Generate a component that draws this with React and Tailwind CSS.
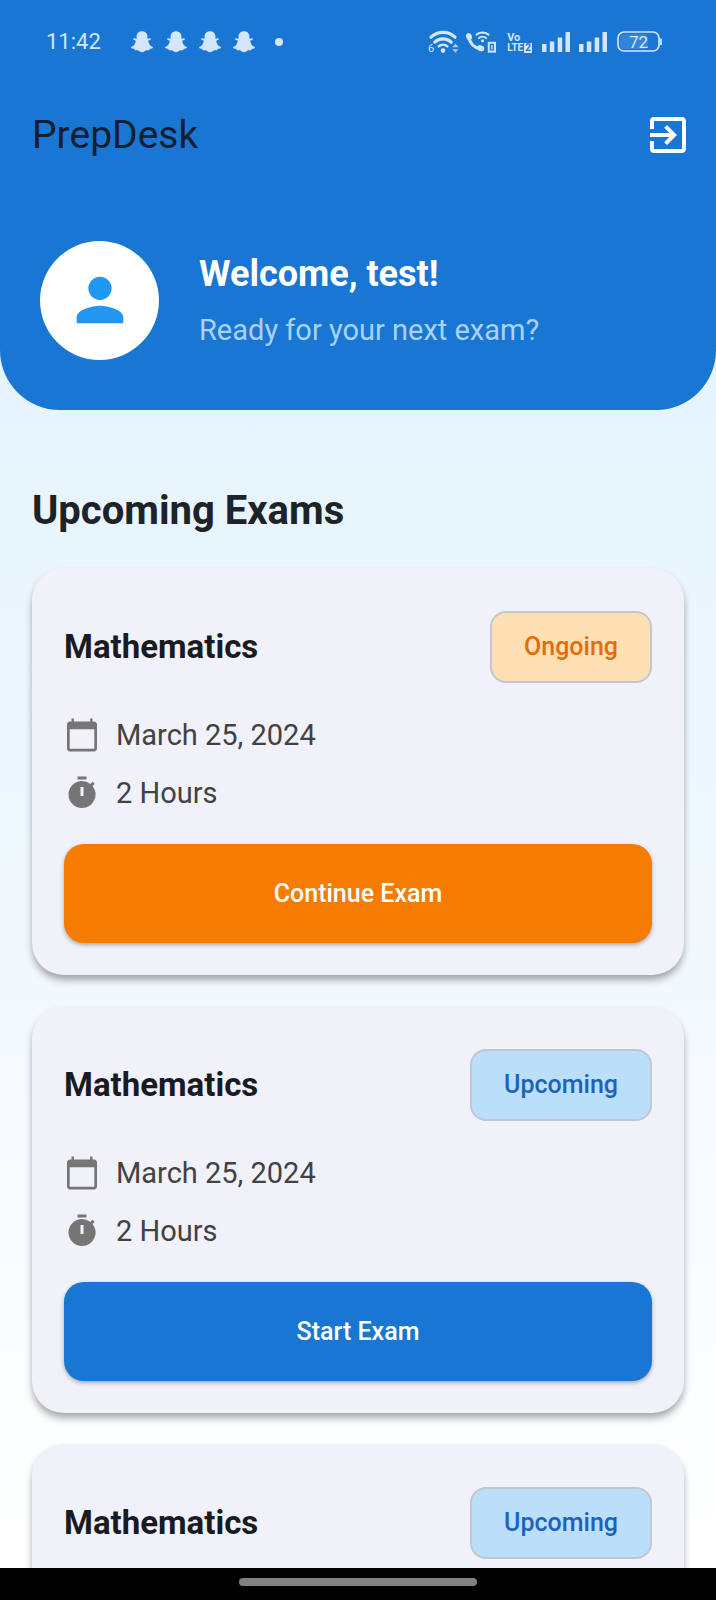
import React from "react";
import { MdExitToApp, MdPerson, MdTimer } from "react-icons/md";

const EXAMS = [
  { id: 1, subject: "Mathematics", date: "March 25, 2024", duration: "2 Hours", status: "Ongoing", open: true },
  { id: 2, subject: "Mathematics", date: "March 25, 2024", duration: "2 Hours", status: "Upcoming", open: true },
  { id: 3, subject: "Mathematics", status: "Upcoming", open: false },
];

const STATUS_STYLES = {
  Ongoing: {
    badge: "bg-[#ffe0b2] text-[#e56c0a]",
    button: "bg-[#f57c00]",
    action: "Continue Exam",
  },
  Upcoming: {
    badge: "bg-[#bbdefb] text-[#1a62bc]",
    button: "bg-[#1976d2]",
    action: "Start Exam",
  },
};

function GhostIcon() {
  return (
    <svg viewBox="0 0 22 22" className="size-[22px]" fill="currentColor" aria-hidden="true">
      <path d="M11 .3c3.2 0 5.4 2.2 5.400 5.200v2.300c1-.1 2.300-.9 3.100-.5.8.5.300 1.300-.6 1.700l-1.700.8c.5 3.200 2 5.200 4.200 6 .7.300.7 1.100 0 1.500-.9.500-2 .5-2.500.8-.5.400-.4 1-1 1.100-.9.200-2-.3-3.100.200-1.200.5-1.900 1.800-3.800 1.800s-2.600-1.300-3.800-1.800c-1.100-.5-2.200 0-3.100-.2-.6-.1-.5-.7-1-1.100-.5-.3-1.600-.3-2.500-.8-.7-.4-.7-1.200 0-1.500 2.200-.8 3.700-2.800 4.200-6L3.100 9c-.9-.4-1.400-1.200-.6-1.700.8-.4 2.100.4 3.100.5V5.500C5.600 2.500 7.800.3 11 .3z" />
    </svg>
  );
}

function WifiIcon() {
  return (
    <svg viewBox="0 0 32 26" className="h-[26px] w-8" aria-hidden="true">
      <g fill="none" stroke="currentColor" strokeWidth="3.2" strokeLinecap="round">
        <path d="M4 8.2A17.5 17.5 0 0 1 28 8.2" />
        <path d="M7.8 13.2A12 12 0 0 1 24.2 13.2" />
        <path d="M11.6 17.4A6.6 6.6 0 0 1 20.4 17.4" strokeWidth="2.4" />
      </g>
      <circle cx="16" cy="21.6" r="2.3" fill="currentColor" />
      <text x="1" y="23.4" fontSize="11" fill="currentColor">6</text>
      <path d="M25.2 18.2L28.4 14.6l3.2 3.6zM25.2 20.2l3.2 3.6 3.2-3.6z" fill="currentColor" opacity=".75" />
    </svg>
  );
}

function WifiCallIcon() {
  return (
    <svg viewBox="0 0 32 26" className="h-[26px] w-8" aria-hidden="true">
      <path d="M3.6 7.5C4.6 14 8.6 18.4 15.6 20" fill="none" stroke="currentColor" strokeWidth="3" />
      <ellipse cx="4" cy="7.6" rx="2.9" ry="3.6" transform="rotate(-20 4 7.6)" fill="currentColor" />
      <ellipse cx="15.6" cy="19.2" rx="3.8" ry="2.9" transform="rotate(20 15.6 19.2)" fill="currentColor" />
      <g fill="none" stroke="currentColor" strokeWidth="2" strokeLinecap="round">
        <path d="M11.5 5.6A9.5 9.5 0 0 1 23.5 5.6" />
        <path d="M14 9A5.2 5.2 0 0 1 21 9" />
      </g>
      <circle cx="17.5" cy="11.8" r="1.5" fill="currentColor" />
      <rect x="23.8" y="13.8" width="6.2" height="8.8" fill="none" stroke="currentColor" strokeWidth="2" />
      <path d="M27 16v4.6" stroke="currentColor" strokeWidth="1.4" />
    </svg>
  );
}

function SignalIcon() {
  return (
    <svg viewBox="0 0 28 20" className="h-5 w-7" fill="currentColor" aria-hidden="true">
      <rect x="0" y="12" width="4.5" height="8" rx=".5" />
      <rect x="7.8" y="9.5" width="4.5" height="10.5" rx=".5" />
      <rect x="15.7" y="5.5" width="4.5" height="14.5" rx=".5" />
      <rect x="23.5" y="0" width="4.5" height="20" rx=".5" />
    </svg>
  );
}

function BatteryIcon() {
  return (
    <svg viewBox="0 0 45 22" className="h-[22px] w-[45px]" role="img" aria-label="Battery 72 percent">
      <rect x="3" y="3" width="28" height="15" rx="4" fill="currentColor" opacity=".14" />
      <rect x="1" y="1" width="41" height="19" rx="6" fill="none" stroke="currentColor" strokeWidth="1.7" />
      <path d="M44 7.5v6.5" stroke="currentColor" strokeWidth="1.8" />
      <text x="21.5" y="17" fontSize="17" textAnchor="middle" fill="currentColor">72</text>
    </svg>
  );
}

function CalendarIcon() {
  return (
    <svg viewBox="0 0 24 24" className="size-9 text-[#757575]" fill="currentColor" aria-hidden="true">
      <path d="M20 3h-1V1h-1.600v2H6.600V1H5v2H4c-1.100 0-2 .9-2 2v16c0 1.100.9 2 2 2h16c1.100 0 2-.9 2-2V5c0-1.100-.9-2-2-2zm.200 18.200H3.800V8.200h16.400v13z" />
    </svg>
  );
}

function StatusBar() {
  return (
    <div className="flex h-21 items-center justify-between pr-[54px] pl-[46px] text-[#d3e6fb]">
      <div className="flex items-center">
        <span className="w-[85px] text-[22px] leading-7">11:42</span>
        <div className="flex items-center gap-3">
          <GhostIcon />
          <GhostIcon />
          <GhostIcon />
          <GhostIcon />
        </div>
        <span className="ml-5 size-2 rounded-full bg-current" />
      </div>
      <div className="flex items-center">
        <WifiIcon />
        <span className="ml-1.5">
          <WifiCallIcon />
        </span>
        <span className="ml-2.5 flex flex-col text-[11px] leading-[11px] font-bold">
          <span>Vo</span>
          <span className="flex items-center gap-px text-[10px] leading-[10px]">
            LTE
            <span className="bg-current px-px">
              <span className="text-[#1976d2]">2</span>
            </span>
          </span>
        </span>
        <span className="ml-2.5 flex gap-[9px]">
          <SignalIcon />
          <SignalIcon />
        </span>
        <span className="ml-2.5">
          <BatteryIcon />
        </span>
      </div>
    </div>
  );
}

function Header() {
  return (
    <header className="shrink-0 rounded-b-[60px] bg-[#1976d2]">
      <StatusBar />
      <div className="flex h-[102px] items-center justify-between pr-6 pl-8">
        <h1 className="text-[39px] leading-[48px] text-[#14202f]">PrepDesk</h1>
        <button type="button" aria-label="Log out" className="text-white">
          <MdExitToApp className="size-12" />
        </button>
      </div>
      <div className="flex items-center gap-10 px-10 pt-[54px] pb-[50px]">
        <div className="flex size-[119px] shrink-0 items-center justify-center rounded-full bg-white text-[#2196f3]">
          <MdPerson className="size-[70px]" />
        </div>
        <div className="flex h-[120px] flex-col justify-center gap-4">
          <p className="text-[36px] leading-[44px] font-bold text-white">Welcome, test!</p>
          <p className="text-[29px] leading-9 text-[#a9d2f8]">Ready for your next exam?</p>
        </div>
      </div>
    </header>
  );
}

function ExamCard({ exam }) {
  const style = STATUS_STYLES[exam.status];
  return (
    <article className="rounded-[32px] bg-[#f1f1fa] p-8 shadow-[0_6px_8px_-1px_rgba(0,0,0,0.28),0_4px_6px_rgba(0,0,0,0.1)]">
      <div className="flex h-[94px] items-center justify-between">
        <h3 className="text-[33px] leading-10 font-bold text-[#1a1b21]">{exam.subject}</h3>
        <span
          className={`flex h-[72px] items-center rounded-2xl border-2 border-[#c3c6cf] px-8 text-[25px] leading-8 font-medium ${style.badge}`}
        >
          {exam.status}
        </span>
      </div>
      {exam.date && (
        <div className="mt-5 flex flex-col gap-4 text-[29px] leading-[42px] text-[#424242]">
          <div className="flex items-center gap-4">
            <CalendarIcon />
            <span>{exam.date}</span>
          </div>
          <div className="flex items-center gap-4">
            <MdTimer className="size-9 text-[#757575]" />
            <span>{exam.duration}</span>
          </div>
        </div>
      )}
      {exam.open && (
        <button
          type="button"
          className={`mt-[30px] h-[99px] w-full rounded-[20px] text-[25px] leading-8 font-medium text-white shadow-[0_2px_4px_rgba(0,0,0,0.3)] ${style.button}`}
        >
          {style.action}
        </button>
      )}
    </article>
  );
}

export default function App() {
  return (
    <div className="flex h-screen flex-col bg-[#e3f2fd] font-['Roboto',sans-serif]">
      <div className="flex min-h-0 flex-1 flex-col bg-linear-to-b from-[#e4f3fd] from-20% to-white">
        <Header />
        <main className="min-h-0 flex-1 overflow-y-auto px-8 pt-[77px] pb-8 [scrollbar-width:none]">
          <h2 className="mb-[33px] text-[40px] leading-[48px] font-bold text-[#1d2327]">Upcoming Exams</h2>
          <div className="flex flex-col gap-[31px]">
            {EXAMS.map((exam) => (
              <ExamCard key={exam.id} exam={exam} />
            ))}
          </div>
        </main>
      </div>
      <footer className="flex h-8 shrink-0 justify-center bg-black pt-2.5">
        <div className="h-2 w-1/3 rounded-full bg-[#808080]" />
      </footer>
    </div>
  );
}
